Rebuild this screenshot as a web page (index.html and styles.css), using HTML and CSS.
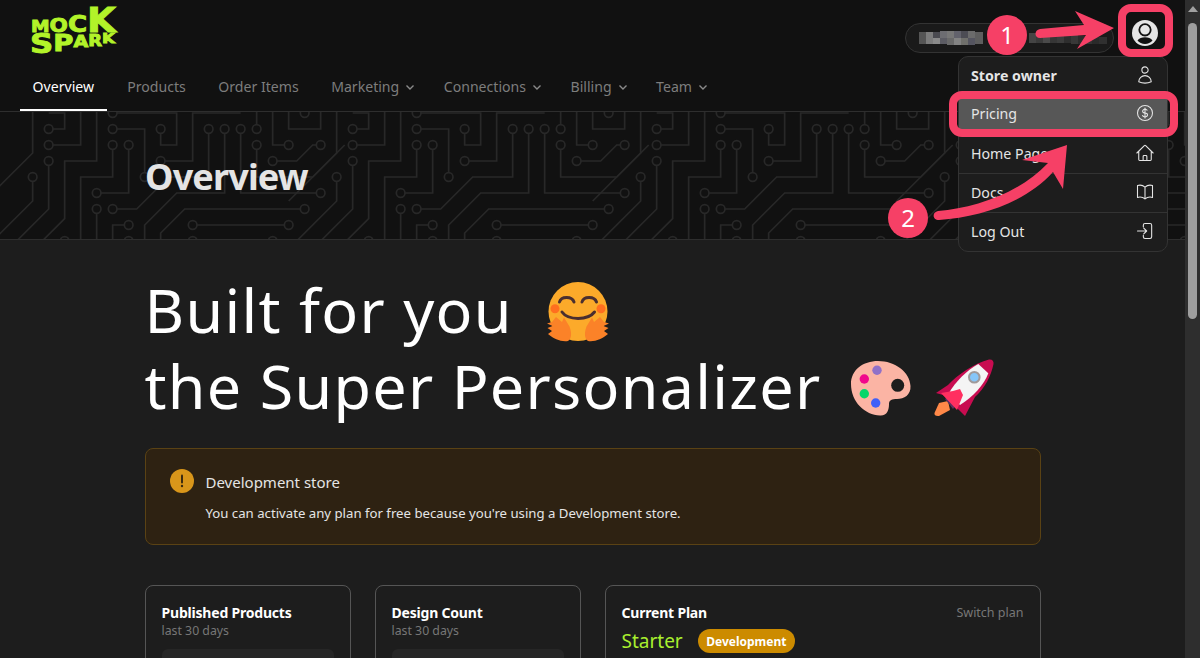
FILE: index.html
```html
<!DOCTYPE html>
<html lang="en">
<head>
<meta charset="utf-8">
<title>Mock Spark Overview</title>
<link rel="stylesheet" href="styles.css">
</head>
<body>
<div class="app">
  <header class="topbar">
    <svg class="logo" width="92" height="64" viewBox="0 0 92 64" aria-label="Mock Spark">
      <g class="logo-type">
        <text x="3" y="32" textLength="85" lengthAdjust="spacingAndGlyphs"><tspan font-size="16.500">M</tspan><tspan font-size="19">O</tspan><tspan font-size="23">C</tspan><tspan font-size="33">K</tspan></text>
        <text x="2" y="53" textLength="85" lengthAdjust="spacingAndGlyphs"><tspan font-size="27">S</tspan><tspan font-size="23" dy="-2">P</tspan><tspan font-size="16" dy="-4">A</tspan><tspan font-size="15" dy="-1">R</tspan><tspan font-size="14" dy="-3">K</tspan></text>
      </g>
    </svg>
    <div class="account">
      <div class="pill">
        <svg width="192" height="14" viewBox="0 0 192 14" aria-hidden="true">
          <g class="mosaic">
            <rect x="0" y="1" width="7" height="12" fill="#555"/><rect x="7" y="1" width="7" height="12" fill="#7c7c7c"/>
            <rect x="14" y="1" width="7" height="6" fill="#4a4a50"/><rect x="14" y="7" width="7" height="6" fill="#8a8a8a"/>
            <rect x="21" y="0" width="7" height="7" fill="#6d6d72"/><rect x="21" y="7" width="7" height="6" fill="#5c5c64"/>
            <rect x="28" y="0" width="7" height="7" fill="#777"/><rect x="28" y="7" width="7" height="7" fill="#6a6a6a"/>
            <rect x="35" y="0" width="7" height="7" fill="#62626c"/><rect x="35" y="7" width="7" height="7" fill="#838383"/>
            <rect x="42" y="0" width="7" height="7" fill="#4c4c54"/><rect x="42" y="7" width="7" height="7" fill="#70706c"/>
            <rect x="49" y="0" width="7" height="7" fill="#6b6b6b"/><rect x="49" y="7" width="7" height="7" fill="#555560"/>
            <rect x="56" y="1" width="8" height="12" fill="#5e5e5e"/>
            <rect x="110" y="2" width="7" height="10" fill="#444"/><rect x="117" y="2" width="7" height="10" fill="#3a3a3a"/>
            <rect x="124" y="2" width="7" height="10" fill="#4a4a4a"/><rect x="131" y="2" width="7" height="10" fill="#363636"/>
            <rect x="138" y="4" width="7" height="8" fill="#3c3c3c"/><rect x="145" y="4" width="7" height="8" fill="#2e2e2e"/>
            <rect x="152" y="4" width="7" height="9" fill="#383838"/><rect x="159" y="5" width="7" height="8" fill="#2c2c2c"/>
            <rect x="166" y="5" width="7" height="8" fill="#333"/><rect x="173" y="6" width="7" height="7" fill="#2a2a2a"/>
            <rect x="180" y="6" width="8" height="7" fill="#303030"/>
          </g>
        </svg>
      </div>
      <div class="avatar">
        <svg width="26" height="26" viewBox="0 0 26 26" aria-hidden="true">
          <circle class="avatar-face" cx="13" cy="13" r="13"/>
          <circle class="avatar-head" cx="13" cy="9.800" r="5.700"/>
          <path class="avatar-cut" d="M5.500 20.500C7 17.800 10 17.200 13 17.200s6 .6 7.500 3.300C18.600 22.700 16 24 13 24s-5.600-1.300-7.500-3.500Z"/>
        </svg>
      </div>
    </div>
  </header>

  <nav class="tabs">
    <a class="tab tab-active">Overview</a>
    <a class="tab">Products</a>
    <a class="tab">Order Items</a>
    <a class="tab">Marketing<svg class="chev" viewBox="0 0 12 12"><path d="M2.500 4.500 6 8 9.500 4.500"/></svg></a>
    <a class="tab">Connections<svg class="chev" viewBox="0 0 12 12"><path d="M2.500 4.500 6 8 9.500 4.500"/></svg></a>
    <a class="tab">Billing<svg class="chev" viewBox="0 0 12 12"><path d="M2.500 4.500 6 8 9.500 4.500"/></svg></a>
    <a class="tab">Team<svg class="chev" viewBox="0 0 12 12"><path d="M2.500 4.500 6 8 9.500 4.500"/></svg></a>
  </nav>

  <section class="banner">
    <svg class="circuit" width="1185" height="127" aria-hidden="true">
      <defs>
        <g id="tile" class="trace-art">
          <path d="M22 1H23V0H22M22 2H24V-1M22 3V6L19 9M25-1V3H23V6.600L20 9.600M26 0H30V2H29V1M26 1H28V4M26 2V4H24V9M27 2V5H25M25 6V9M26 6H27.500L29.500 4H32V1M33 1V5H30L28 7V9M34 1V5H39M29 3H31V0H34M35 1V-1M35 2V4H38.500L40.500 2M36-1V2H37M36 3H37.500L38.500 2H39M37-1V1H39V-1M21 4V5.500L18 8.500M21-1V2.500L18 5.500M27 7H26V9M31 7H37M38 6H30.500L29 7.500V9"/>
          <circle cx="22" cy="1" r=".27"/><circle cx="22" cy="2" r=".27"/><circle cx="22" cy="3" r=".27"/>
          <circle cx="26" cy="0" r=".27"/><circle cx="26" cy="1" r=".27"/><circle cx="26" cy="2" r=".27"/>
          <circle cx="27" cy="2" r=".27"/><circle cx="25" cy="5" r=".27"/><circle cx="25" cy="6" r=".27"/>
          <circle cx="26" cy="6" r=".27"/><circle cx="28" cy="4" r=".27"/><circle cx="29" cy="1" r=".27"/>
          <circle cx="29" cy="3" r=".27"/><circle cx="32" cy="1" r=".27"/><circle cx="33" cy="1" r=".27"/>
          <circle cx="34" cy="1" r=".27"/><circle cx="35" cy="1" r=".27"/><circle cx="35" cy="2" r=".27"/>
          <circle cx="36" cy="3" r=".27"/><circle cx="37" cy="2" r=".27"/><circle cx="38" cy="0" r=".27"/>
          <circle cx="39" cy="2" r=".27"/><circle cx="39" cy="5" r=".27"/><circle cx="21" cy="4" r=".27"/>
          <circle cx="27" cy="7" r=".27"/><circle cx="27" cy="8" r=".27"/><circle cx="31" cy="7" r=".27"/>
          <circle cx="37" cy="7" r=".27"/><circle cx="38" cy="6" r=".27"/><circle cx="23" cy="8" r=".27"/>
          <circle cx="31" cy="8" r=".27"/><circle cx="36" cy="8" r=".27"/>
        </g>
      </defs>
      <g transform="translate(.67 1) scale(16)">
        <use href="#tile" x="-19"/><use href="#tile"/><use href="#tile" x="19"/><use href="#tile" x="38"/>
      </g>
    </svg>
    <h2 class="banner-title">Overview</h2>
  </section>

  <main class="content">
    <h1 class="hero">
      <span class="hero-line">Built for you
        <svg class="emoji emoji-hug" width="64" height="64" viewBox="0 0 64 64" aria-hidden="true">
          <circle cx="32" cy="30.500" r="29.500" fill="#fcaa2a"/>
          <circle cx="9" cy="27.700" r="4.500" fill="#ff6f1f"/><circle cx="55" cy="27.700" r="4.500" fill="#ff6f1f"/>
          <path d="M13.500 21c1.500-6 12.500-6 14.500 0M36 21c1.500-6 12.500-6 14.500 0M16 31c6 8.500 26 8.500 32.500 0" fill="none" stroke="#4a2f2f" stroke-width="3" stroke-linecap="round"/>
          <path d="M10 36 16 41l2-4.500 5.500 9C26 52 25.500 58 22 60 15 61 8 58 2 53l4-3-4.500-3 5-2L1 42.500 6 41Z" fill="#fb8228"/>
          <path d="M54 36 48 41l-2-4.500-5.500 9C38 52 38.500 58 42 60 49 61 56 58 62 53l-4-3 4.500-3-5-2L63 42.500 58 41Z" fill="#fb8228"/>
        </svg>
      </span>
      <span class="hero-line">the Super Personalizer
        <svg class="emoji emoji-palette" width="60" height="56" viewBox="0 0 60 56" aria-hidden="true">
          <path d="M27 1C44 1 59 12 59.500 26 60 35 53 39 46 39 41 39 38 40 38 44 38 50 36 56 29 55.500 14 55 0 42 0 24 0 10 12 1 27 1Z" fill="#fbb4a4"/>
          <circle cx="46.700" cy="25.300" r="6.500" fill="#1d1d1d"/>
          <circle cx="26" cy="10.300" r="4.700" fill="#9070c8"/><circle cx="13.300" cy="19" r="4.700" fill="#f0088c"/>
          <circle cx="13.300" cy="33.700" r="4.700" fill="#05d66a"/><circle cx="24.700" cy="43" r="4.700" fill="#4060f8"/>
        </svg>
        <svg class="emoji emoji-rocket" width="64" height="60" viewBox="0 0 64 60" aria-hidden="true">
          <path d="M1.500 55 6 45l9-2 2 9-11 6c-3 .5-5-1-4.500-3Z" fill="#ff8848"/>
          <path d="M12 41 18 36 25 45 20 51Z" fill="#5a3060"/>
          <path d="M56 1.500C59 1 61 3 60.500 6 58 18 52 30 42 39L32 58 24 50 10 37 3 35 15 27C24 17 42 5 56 1.500Z" fill="#c80c50"/>
          <path d="M45.300 6 55.300 15.300C51 27 40 39 27 47L15.300 36C23 23 33 13 45.300 6Z" fill="#f4f4f4"/>
          <circle cx="41.300" cy="19.300" r="5.300" fill="#86c6f8" stroke="#a09a9a" stroke-width="2"/>
          <path d="M8 35 20 33 27 31 30 37 24 52 Z" fill="#ff2f60"/>
        </svg>
      </span>
    </h1>

    <div class="alert">
      <div class="alert-head">
        <svg class="alert-icon" width="24" height="24" viewBox="0 0 24 24" aria-hidden="true">
          <circle cx="12" cy="12" r="12" fill="#d9961a"/>
          <path d="M12 6.500V13.500" stroke="#3b2a10" stroke-width="2" stroke-linecap="round"/>
          <circle cx="12" cy="17" r="1.200" fill="#3b2a10"/>
        </svg>
        <span class="alert-title">Development store</span>
      </div>
      <p class="alert-body">You can activate any plan for free because you're using a Development store.</p>
    </div>

    <div class="cards">
      <article class="card">
        <h3 class="card-title">Published Products</h3>
        <p class="card-sub">last 30 days</p>
        <div class="card-box"></div>
      </article>
      <article class="card">
        <h3 class="card-title">Design Count</h3>
        <p class="card-sub">last 30 days</p>
        <div class="card-box"></div>
      </article>
      <article class="card">
        <div class="plan-top">
          <h3 class="card-title">Current Plan</h3>
          <a class="switch">Switch plan</a>
        </div>
        <div class="plan-row">
          <span class="plan-name">Starter</span>
          <span class="badge">Development</span>
        </div>
      </article>
    </div>
  </main>
</div>

<aside class="scrollbar" aria-hidden="true">
  <svg class="scroll-arrow" width="10" height="6" viewBox="0 0 10 6"><path d="M5 0 10 6H0Z"/></svg>
  <div class="scroll-thumb"></div>
</aside>

<div class="menu">
  <div class="menu-row menu-row-strong"><span>Store owner</span>
    <svg class="menu-icon" viewBox="0 0 24 24"><path d="M15.750 6a3.750 3.750 0 1 1-7.500 0 3.750 3.750 0 0 1 7.500 0ZM4.501 20.118a7.500 7.500 0 0 1 14.998 0A17.933 17.933 0 0 1 12 21.750c-2.676 0-5.216-.584-7.499-1.632Z"/></svg>
  </div>
  <div class="menu-row menu-row-hot"><span>Pricing</span>
    <svg class="menu-icon" viewBox="0 0 24 24"><path d="M12 6v12m-3-2.818.879.659c1.171.879 3.070.879 4.242 0 1.172-.879 1.172-2.303 0-3.182C13.536 12.219 12.768 12 12 12c-.725 0-1.450-.220-2.003-.659-1.106-.879-1.106-2.303 0-3.182s2.900-.879 4.006 0l.415.330M21 12a9 9 0 1 1-18 0 9 9 0 0 1 18 0Z"/></svg>
  </div>
  <div class="menu-row menu-row-line"><span>Home Page</span>
    <svg class="menu-icon" viewBox="0 0 24 24"><path d="m2.250 12 8.954-8.955c.440-.439 1.152-.439 1.591 0L21.750 12M4.500 9.750v10.125c0 .621.504 1.125 1.125 1.125H9.750v-4.875c0-.621.504-1.125 1.125-1.125h2.250c.621 0 1.125.504 1.125 1.125V21h4.125c.621 0 1.125-.504 1.125-1.125V9.750M8.250 21h8.250"/></svg>
  </div>
  <div class="menu-row menu-row-line"><span>Docs</span>
    <svg class="menu-icon" viewBox="0 0 24 24"><path d="M12 6.042A8.967 8.967 0 0 0 6 3.750c-1.052 0-2.062.180-3 .512v14.250A8.987 8.987 0 0 1 6 18c2.305 0 4.408.867 6 2.292m0-14.250a8.966 8.966 0 0 1 6-2.292c1.052 0 2.062.180 3 .512v14.250A8.987 8.987 0 0 0 18 18a8.967 8.967 0 0 0-6 2.292m0-14.250v14.250"/></svg>
  </div>
  <div class="menu-row menu-row-last"><span>Log Out</span>
    <svg class="menu-icon" viewBox="0 0 24 24"><path d="M10 7V5a2 2 0 0 1 2-2h6a2 2 0 0 1 2 2v14a2 2 0 0 1-2 2h-6a2 2 0 0 1-2-2v-2M3 12h11m-3.500-3.500L14 12l-3.500 3.500"/></svg>
  </div>
</div>

<svg class="marks" width="1200" height="658" viewBox="0 0 1200 658" aria-hidden="true">
  <rect class="mark-frame" x="1122" y="8" width="47" height="45" rx="9"/>
  <rect class="mark-frame" x="953" y="95" width="221" height="38" rx="9"/>
  <path class="mark-fill" d="M1040 29 1084 25 1075 11 1114 28 1077 49 1086 35 1040 38C1034 38 1034 30 1040 29Z"/>
  <path class="mark-fill" d="M938 211C975 208 1020 193 1048 163L1022 160 1067 145 1063 189 1053 172C1025 203 980 217 939 220 932 220 932 212 938 211Z"/>
  <circle class="mark-fill" cx="1007" cy="35" r="20"/>
  <circle class="mark-fill" cx="908" cy="218" r="20"/>
  <text class="mark-num" x="1007" y="44">1</text>
  <text class="mark-num" x="908" y="227">2</text>
</svg>
</body>
</html>
```

FILE: styles.css
```css
* { box-sizing: border-box; }
html, body { height: 100%; }
body {
  margin: 0;
  height: 658px;
  overflow: hidden;
  display: flex;
  background: #1d1d1d;
  color: #e5e5e5;
  font-family: "Noto Sans", "Open Sans", "Liberation Sans", sans-serif;
}
h1, h2, h3, p { margin: 0; }

.app { flex: 1; min-width: 0; height: 658px; overflow: hidden; display: flex; flex-direction: column; }

.topbar {
  height: 64px;
  flex: none;
  background: #111;
  display: flex;
  justify-content: space-between;
  align-items: flex-start;
  padding: 6px 16px 0 28px;
}
.logo { display: block; margin-top: -6px; }
.logo-type text { font-family: "DejaVu Sans", sans-serif; font-weight: 700; fill: #b2f329; stroke: #b2f329; stroke-width: .9px; }
.account { display: flex; align-items: center; gap: 7px; }
.pill {
  width: 209px; height: 30px;
  margin-top: 11px;
  border: 1px solid #333;
  border-radius: 15px;
  background: #1a1a1a;
  display: flex; align-items: center;
  padding-left: 13px;
}
.pill svg { display: block; }
.avatar { width: 48px; height: 52px; display: flex; align-items: center; justify-content: center; }
.avatar svg { display: block; margin-top: 1px; }
.avatar-face { fill: #e5e5e5; }
.avatar-head { fill: #e5e5e5; stroke: #111; stroke-width: 1.8; }
.avatar-cut { fill: #111; }

.tabs {
  height: 48px;
  flex: none;
  background: #111;
  border-bottom: 1px solid #2e2e2e;
  display: flex;
  padding-left: 20px;
  gap: 8.5px;
}
.tab {
  height: 47px;
  padding: 0 12px;
  display: flex; align-items: center;
  font-size: 14.1px;
  color: #7d7d7d;
  white-space: nowrap;
  border-bottom: 2px solid transparent;
}
.tab-active { color: #fff; border-bottom-color: #fff; padding: 0 12.6px; }
.chev { width: 12px; height: 12px; margin: 0 -5px 0 5px; fill: none; stroke: #8a8a8a; stroke-width: 1.4; }

.banner {
  position: relative;
  height: 128px;
  flex: none;
  background: #111;
  border-bottom: 1px solid #2e2e2e;
  overflow: hidden;
  padding: 2px 0 0 145px;
  display: flex; align-items: center;
}
.circuit { position: absolute; left: 0; top: 0; }
.trace-art path { fill: none; stroke: #282828; stroke-width: .105; }
.trace-art circle { fill: #111; stroke: #282828; stroke-width: .105; }
.banner-title { position: relative; font-size: 36px; font-weight: 700; color: #e4e4e4; letter-spacing: -.85px; }

.content { width: 896px; margin: 0 auto; flex: none; }
.hero { font-size: 61px; font-weight: 400; color: #fff; line-height: 76px; margin-top: 32px; display: flex; flex-direction: column; letter-spacing: 1.3px; }
.hero-line { display: flex; align-items: center; gap: 30px; white-space: nowrap; }
.emoji-hug { margin: 6px 0 0 3px; }
.emoji-palette { margin: 4px 0 0 -1px; }
.emoji-rocket { margin: 4px 0 0 -8px; }

.alert {
  height: 97px;
  margin-top: 24px;
  background: #2e2212;
  border: 1px solid #5a4214;
  border-radius: 8px;
  padding: 22px 24px 0;
}
.alert-head { display: flex; align-items: center; gap: 12px; }
.alert-icon { display: block; flex: none; margin-top: -2px; }
.alert-title { font-size: 15px; color: #e5e5e5; }
.alert-body { font-size: 13.2px; color: #e5e5e5; margin: 11px 0 0 36px; }

.cards { display: grid; grid-template-columns: 206px 206px 436px; gap: 24px; margin-top: 40px; }
.card { height: 120px; border: 1px solid #555; border-radius: 8px; padding: 17px 16px 0; }
.card-title { font-size: 14px; font-weight: 700; color: #fff; letter-spacing: -.2px; }
.card-sub { font-size: 12.3px; color: #777; margin-top: 0; }
.card-box { height: 60px; margin-top: 10px; background: #262626; border-radius: 6px; }
.plan-top { display: flex; justify-content: space-between; align-items: center; }
.switch { font-size: 12.5px; color: #777; }
.plan-row { display: flex; align-items: center; gap: 15px; margin-top: 6px; }
.plan-name { font-size: 19px; color: #a9f02e; }
.badge { height: 24px; padding: 0 8.5px; display: flex; align-items: center; background: #cc8b00; border-radius: 12px; font-size: 12px; font-weight: 700; color: #fff; }

.scrollbar { flex: none; width: 15px; height: 658px; background: #2e2e2e; display: flex; flex-direction: column; align-items: center; padding-top: 6px; gap: 11px; }
.scroll-arrow { display: block; fill: #a0a0a0; }
.scroll-thumb { width: 9px; height: 296px; background: #9e9e9e; border-radius: 5px; }

.menu {
  position: absolute;
  left: 958px; top: 56px;
  width: 210px;
  background: #1d1d1d;
  border: 1px solid #333;
  border-radius: 10px;
  display: flex; flex-direction: column;
}
.menu-row {
  height: 39px;
  padding: 0 12px 2px;
  display: flex; justify-content: space-between; align-items: center;
  font-size: 14.2px;
  color: #e5e5e5;
}
.menu-row-strong { font-weight: 700; height: 38px; }
.menu-row-hot { background: #575757; height: 30px; margin: 4px 0 6px; }
.menu-row-line { border-bottom: 1px solid #333; }
.menu-row-last { height: 38px; }
.menu-icon { width: 20px; height: 20px; fill: none; stroke: #e5e5e5; stroke-width: 1.3; stroke-linecap: round; stroke-linejoin: round; }

.marks { position: absolute; left: 0; top: 0; pointer-events: none; }
.mark-frame { fill: none; stroke: #f64066; stroke-width: 8; }
.mark-fill { fill: #f64066; }
.mark-num { font-family: "Noto Sans", sans-serif; font-size: 24px; fill: #fff; text-anchor: middle; }
```
